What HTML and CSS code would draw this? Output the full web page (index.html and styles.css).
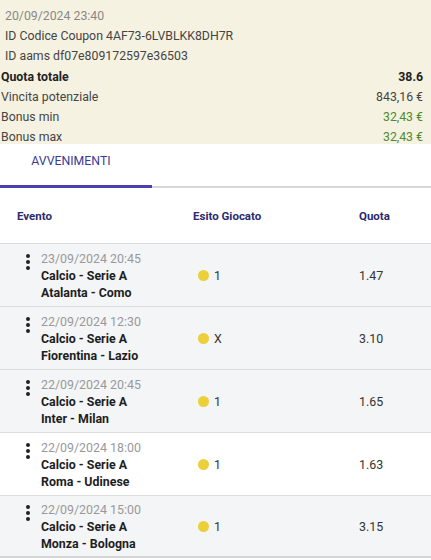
FILE: index.html
```html
<!DOCTYPE html>
<html>
<head>
<meta charset="utf-8">
<link rel="stylesheet" href="styles.css">
</head>
<body>
<div class="summary">
  <div class="meta date">20/09/2024 23:40</div>
  <div class="meta">ID Codice Coupon 4AF73-6LVBLKK8DH7R</div>
  <div class="meta">ID aams df07e809172597e36503</div>
  <div class="line strong"><span>Quota totale</span><span>38.6</span></div>
  <div class="line"><span>Vincita potenziale</span><span>843,16 €</span></div>
  <div class="line"><span>Bonus min</span><span class="green">32,43 €</span></div>
  <div class="line"><span>Bonus max</span><span class="green">32,43 €</span></div>
</div>
<div class="tabs">
  <div class="tab active">AVVENIMENTI</div>
</div>
<div class="table">
  <div class="thead">
    <div class="c1">Evento</div>
    <div class="c2">Esito Giocato</div>
    <div class="c3">Quota</div>
  </div>
  <div class="row alt">
    <div class="c1 ev"><span class="kebab"><i></i><i></i><i></i></span><div><div class="when">23/09/2024 20:45</div><div class="name">Calcio - Serie A</div><div class="name">Atalanta - Como</div></div></div>
    <div class="c2 pick"><span class="dot"></span>1</div>
    <div class="c3 odd">1.47</div>
  </div>
  <div class="row alt">
    <div class="c1 ev"><span class="kebab"><i></i><i></i><i></i></span><div><div class="when">22/09/2024 12:30</div><div class="name">Calcio - Serie A</div><div class="name">Fiorentina - Lazio</div></div></div>
    <div class="c2 pick"><span class="dot"></span>X</div>
    <div class="c3 odd">3.10</div>
  </div>
  <div class="row alt">
    <div class="c1 ev"><span class="kebab"><i></i><i></i><i></i></span><div><div class="when">22/09/2024 20:45</div><div class="name">Calcio - Serie A</div><div class="name">Inter - Milan</div></div></div>
    <div class="c2 pick"><span class="dot"></span>1</div>
    <div class="c3 odd">1.65</div>
  </div>
  <div class="row">
    <div class="c1 ev"><span class="kebab"><i></i><i></i><i></i></span><div><div class="when">22/09/2024 18:00</div><div class="name">Calcio - Serie A</div><div class="name">Roma - Udinese</div></div></div>
    <div class="c2 pick"><span class="dot"></span>1</div>
    <div class="c3 odd">1.63</div>
  </div>
  <div class="row alt">
    <div class="c1 ev"><span class="kebab"><i></i><i></i><i></i></span><div><div class="when">22/09/2024 15:00</div><div class="name">Calcio - Serie A</div><div class="name">Monza - Bologna</div></div></div>
    <div class="c2 pick"><span class="dot"></span>1</div>
    <div class="c3 odd">3.15</div>
  </div>
</div>
</body>
</html>
```
FILE: styles.css
```css
* { box-sizing: border-box; }
html, body { margin: 0; padding: 0; background: #fff; }
body {
  font-family: Roboto, "Liberation Sans", sans-serif;
  color: #333;
  width: 431px;
  overflow: hidden;
}
.summary {
  background: #f6f2e2;
  padding: 6px 8px 3px 1px;
  height: 144px;
}
.meta {
  font-size: 12.3px;
  line-height: 20px;
  padding-left: 4px;
  color: #444;
}
.meta.date { color: #888; }
.line {
  display: flex;
  justify-content: space-between;
  font-size: 12.3px;
  line-height: 20px;
  color: #444;
  position: relative;
  top: 1px;
}
.line.strong { font-weight: 700; color: #222; }
.green { color: #4f8a2a; }
.tabs {
  height: 44px;
  border-bottom: 2px solid #d6d6d6;
  display: flex;
}
.tab {
  width: 152px;
  text-align: center;
  font-size: 12.3px;
  line-height: 34px;
  color: #3b3a96;
  padding-right: 10px;
  border-bottom: 3px solid #4b3fb0;
  margin-bottom: -2px;
}
.thead, .row {
  display: grid;
  grid-template-columns: 176px 166px 1fr;
}
.thead {
  height: 55px;
  align-items: center;
  font-size: 11.5px;
  font-weight: 700;
  color: #2b2a6e;
}
.thead .c1 { padding-left: 17px; }
.thead .c2 { padding-left: 17px; }
.thead .c3 { padding-left: 17px; }
.row {
  border-top: 1px solid #dcdcdc;
  background: #fff;
  height: 63px;
  align-items: center;
}
.row.alt { background: #f4f5f7; }
.row:last-child { border-bottom: 2px solid #d6d6d6; }
.ev {
  display: flex;
  align-items: flex-start;
  padding-left: 26px;
}
.kebab {
  width: 15px;
  display: flex;
  flex-direction: column;
  gap: 2px;
  padding-top: 4px;
}
.kebab i {
  display: block;
  width: 4px;
  height: 4px;
  border-radius: 50%;
  background: #222;
}
.when {
  font-size: 12.4px;
  line-height: 17px;
  color: #999;
}
.name {
  font-size: 12.4px;
  line-height: 17px;
  font-weight: 700;
  color: #1e1e1e;
}
.pick {
  display: flex;
  align-items: center;
  padding-left: 22px;
  font-size: 12.4px;
  color: #333;
}
.dot {
  width: 11px;
  height: 11px;
  border-radius: 50%;
  background: #ecd03a;
  margin-right: 5px;
}
.odd {
  font-size: 12.4px;
  color: #333;
  padding-left: 17px;
}
```
